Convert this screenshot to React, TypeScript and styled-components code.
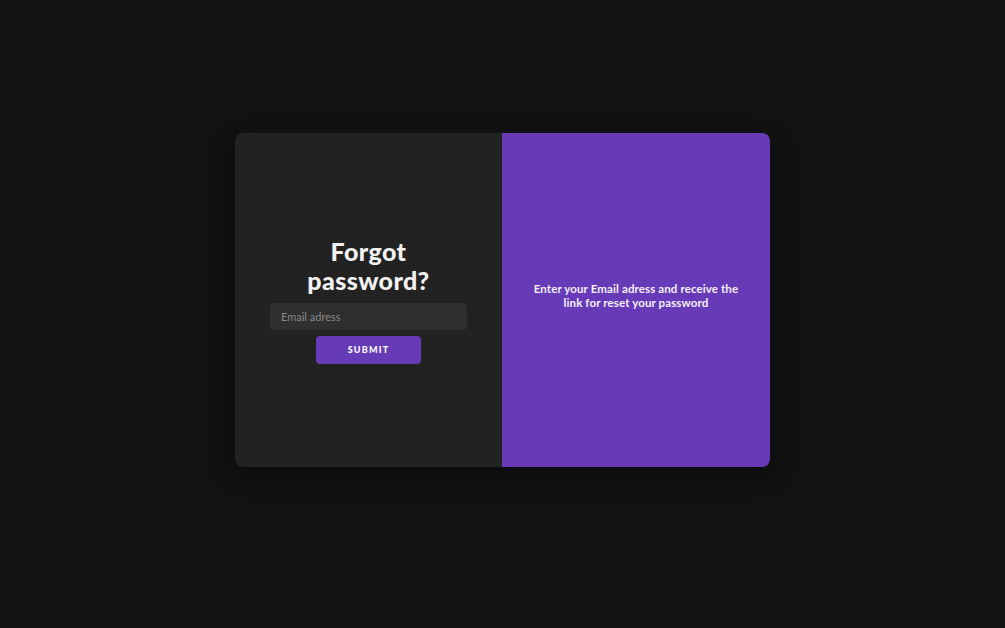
import React from 'react';
import styled, { createGlobalStyle } from 'styled-components';

const GlobalStyle = createGlobalStyle`
  html, body {
    margin: 0;
    padding: 0;
    background: #121212;
    font-family: Lato, "Noto Sans", sans-serif;
  }
`;

const Page = styled.div`
  min-height: 100vh;
  display: flex;
  justify-content: center;
  align-items: flex-start;
  padding-top: 133px;
  box-sizing: border-box;
`;

const Card = styled.div`
  width: 535px;
  height: 334px;
  display: grid;
  grid-template-columns: 267px 268px;
  border-radius: 8px;
  overflow: hidden;
  box-shadow: 0 8px 24px rgba(0, 0, 0, 0.45);
`;

const Panel = styled.div<{ $accent?: boolean }>`
  display: flex;
  flex-direction: column;
  align-items: center;
  justify-content: center;
  background: ${(p) => (p.$accent ? '#673ab7' : '#222222')};
  padding: 0 20px;
  box-sizing: border-box;
`;

const Title = styled.h1`
  margin: 0 0 8px;
  color: #f2f2f2;
  font-size: 25px;
  font-weight: 900;
  line-height: 29px;
  text-align: center;
  letter-spacing: 0.4px;
`;

const Input = styled.input`
  width: 197px;
  height: 27px;
  box-sizing: border-box;
  border: none;
  outline: none;
  border-radius: 4px;
  background: #2f2f2f;
  color: #ddd;
  padding: 0 11px;
  font-family: inherit;
  font-size: 11px;
  &::placeholder {
    color: #8a8a8a;
  }
`;

const Button = styled.button`
  margin-top: 6px;
  width: 105px;
  height: 28px;
  border: none;
  border-radius: 4px;
  background: #673ab7;
  color: #fff;
  font-family: inherit;
  font-size: 9px;
  font-weight: 900;
  letter-spacing: 1.2px;
  cursor: pointer;
`;

const Info = styled.p`
  width: 212px;
  margin: 0 0 8px;
  color: #f4f0fa;
  font-size: 11.5px;
  font-weight: 700;
  line-height: 14px;
  text-align: center;
  letter-spacing: 0.12px;
`;

export default function App() {
  return (
    <>
      <GlobalStyle />
      <Page>
        <Card>
          <Panel>
            <Title>
              Forgot
              <br />
              password?
            </Title>
            <Input type="email" placeholder="Email adress" />
            <Button>SUBMIT</Button>
          </Panel>
          <Panel $accent>
            <Info>Enter your Email adress and receive the link for reset your password</Info>
          </Panel>
        </Card>
      </Page>
    </>
  );
}
